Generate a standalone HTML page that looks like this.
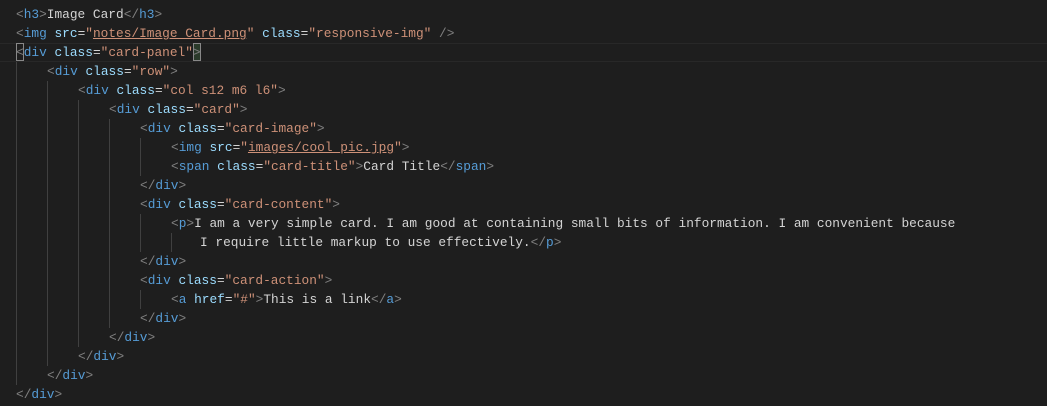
<!DOCTYPE html>
<html><head><meta charset="utf-8"><style>
html,body{margin:0;padding:0;background:#1e1e1e;width:1047px;height:406px;overflow:hidden;position:relative}
.l{position:absolute;height:19px;line-height:19px;font-family:"Liberation Mono",monospace;font-size:12.82px;white-space:pre;color:#d4d4d4;margin-top:1px}
.p{color:#808080}.t{color:#569cd6}.a{color:#9cdcfe}.s{color:#ce9178}.u{text-decoration:underline}
.g{position:absolute;width:1px;background:#404040}
.hl{position:absolute;left:0;width:1047px;top:43px;height:17px;border-top:1px solid #282828;border-bottom:1px solid #282828}
.bx{position:absolute;border:1px solid #888;box-sizing:border-box;height:18px;top:43px}
</style></head><body>
<div class="hl"></div>
<div class="bx" style="left:16px;width:8px"></div>
<div class="bx" style="left:193px;width:8px;background:#2a3a2a"></div>
<div class="g" style="left:16px;top:62px;height:323px"></div>
<div class="g" style="left:47px;top:81px;height:285px"></div>
<div class="g" style="left:78px;top:100px;height:247px"></div>
<div class="g" style="left:109px;top:119px;height:209px"></div>
<div class="g" style="left:140px;top:138px;height:38px"></div>
<div class="g" style="left:140px;top:214px;height:38px"></div>
<div class="g" style="left:140px;top:290px;height:19px"></div>
<div class="g" style="left:171px;top:233px;height:19px"></div>

<div class="l" style="top:4px;left:16px"><span class="p">&lt;</span><span class="t">h3</span><span class="p">&gt;</span>Image Card<span class="p">&lt;/</span><span class="t">h3</span><span class="p">&gt;</span></div>
<div class="l" style="top:23px;left:16px"><span class="p">&lt;</span><span class="t">img</span> <span class="a">src</span>=<span class="s">"<span class="u">notes/Image Card.png</span>"</span> <span class="a">class</span>=<span class="s">"responsive-img"</span> <span class="p">/&gt;</span></div>
<div class="l" style="top:42px;left:16px"><span class="p">&lt;</span><span class="t">div</span> <span class="a">class</span>=<span class="s">"card-panel"</span><span class="p">&gt;</span></div>
<div class="l" style="top:61px;left:47px"><span class="p">&lt;</span><span class="t">div</span> <span class="a">class</span>=<span class="s">"row"</span><span class="p">&gt;</span></div>
<div class="l" style="top:80px;left:78px"><span class="p">&lt;</span><span class="t">div</span> <span class="a">class</span>=<span class="s">"col s12 m6 l6"</span><span class="p">&gt;</span></div>
<div class="l" style="top:99px;left:109px"><span class="p">&lt;</span><span class="t">div</span> <span class="a">class</span>=<span class="s">"card"</span><span class="p">&gt;</span></div>
<div class="l" style="top:118px;left:140px"><span class="p">&lt;</span><span class="t">div</span> <span class="a">class</span>=<span class="s">"card-image"</span><span class="p">&gt;</span></div>
<div class="l" style="top:137px;left:171px"><span class="p">&lt;</span><span class="t">img</span> <span class="a">src</span>=<span class="s">"<span class="u">images/cool_pic.jpg</span>"</span><span class="p">&gt;</span></div>
<div class="l" style="top:156px;left:171px"><span class="p">&lt;</span><span class="t">span</span> <span class="a">class</span>=<span class="s">"card-title"</span><span class="p">&gt;</span>Card Title<span class="p">&lt;/</span><span class="t">span</span><span class="p">&gt;</span></div>
<div class="l" style="top:175px;left:140px"><span class="p">&lt;/</span><span class="t">div</span><span class="p">&gt;</span></div>
<div class="l" style="top:194px;left:140px"><span class="p">&lt;</span><span class="t">div</span> <span class="a">class</span>=<span class="s">"card-content"</span><span class="p">&gt;</span></div>
<div class="l" style="top:213px;left:171px"><span class="p">&lt;</span><span class="t">p</span><span class="p">&gt;</span>I am a very simple card. I am good at containing small bits of information. I am convenient because</div>
<div class="l" style="top:232px;left:200px">I require little markup to use effectively.<span class="p">&lt;/</span><span class="t">p</span><span class="p">&gt;</span></div>
<div class="l" style="top:251px;left:140px"><span class="p">&lt;/</span><span class="t">div</span><span class="p">&gt;</span></div>
<div class="l" style="top:270px;left:140px"><span class="p">&lt;</span><span class="t">div</span> <span class="a">class</span>=<span class="s">"card-action"</span><span class="p">&gt;</span></div>
<div class="l" style="top:289px;left:171px"><span class="p">&lt;</span><span class="t">a</span> <span class="a">href</span>=<span class="s">"#"</span><span class="p">&gt;</span>This is a link<span class="p">&lt;/</span><span class="t">a</span><span class="p">&gt;</span></div>
<div class="l" style="top:308px;left:140px"><span class="p">&lt;/</span><span class="t">div</span><span class="p">&gt;</span></div>
<div class="l" style="top:327px;left:109px"><span class="p">&lt;/</span><span class="t">div</span><span class="p">&gt;</span></div>
<div class="l" style="top:346px;left:78px"><span class="p">&lt;/</span><span class="t">div</span><span class="p">&gt;</span></div>
<div class="l" style="top:365px;left:47px"><span class="p">&lt;/</span><span class="t">div</span><span class="p">&gt;</span></div>
<div class="l" style="top:384px;left:16px"><span class="p">&lt;/</span><span class="t">div</span><span class="p">&gt;</span></div>
</body></html>
